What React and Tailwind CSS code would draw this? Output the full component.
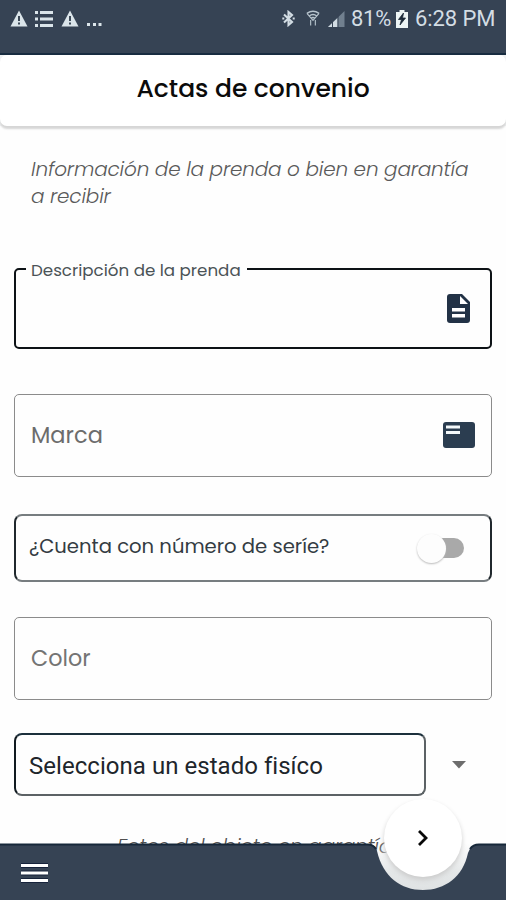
import React from "react";

const poppins = "font-['Poppins','Inter',sans-serif]";

function Warning() {
  return (
    <svg width="18" height="17" viewBox="0 0 18 17" className="shrink-0">
      <path d="M9 .5 L17.5 16.500 H.5Z" fill="#dbe5ea" />
      <path d="M9 6v5M9 12.500v2" stroke="#3b4856" strokeWidth="2" />
    </svg>
  );
}

function StatusBar() {
  return (
    <header className="h-[55px] shrink-0 border-b-2 border-[#182c40] bg-[#364354] text-[#d3dde4]">
      <div className="flex h-[37px] items-center pl-[10px] pr-[11px]">
        <Warning />
        <svg width="18" height="18" viewBox="0 0 18 18" className="ml-[7px]" fill="#dbe5ea">
          <path d="M0 1h3v3H0zM5 1h13v3H5zM0 7.500h3v3H0zM5 7.500h13v3H5zM0 14h3v3H0zM5 14h13v3H5z" />
        </svg>
        <div className="ml-[8px] flex"><Warning /></div>
        <svg width="16" height="18" viewBox="0 0 16 18" className="ml-[7px]" fill="#dbe5ea">
          <path d="M1 13h3v3H1zM7 13h3v3H7zM12.500 13h3v3h-3z" />
        </svg>
        <div className="ml-auto flex items-center">
          <svg width="13" height="17" viewBox="0 0 13 17" fill="none" stroke="#d3dde4" strokeWidth="2.1">
            <path d="M2 4.500 10 12 6.500 15V2L10 5 2 12.500" />
            <path d="M.3 8.500h2M10.700 8.500h2" />
          </svg>
          <svg width="14" height="17" viewBox="0 0 15 18" className="ml-[11px]" fill="none" stroke="#b7c4cd" strokeWidth="1.500">
            <path d="M1 3.500Q7.500-1 14 3.500M3.500 6.300Q7.500 3 11.500 6.300M5.500 8.800Q7.500 7 9.500 8.800" />
            <path d="M1 3.500 7.500 11 14 3.500M5 10.500v6M10 10.500v6" strokeWidth="1.2" />
          </svg>
          <svg width="18" height="18" viewBox="0 0 18 18" className="ml-[7px]">
            <path d="M17.500 1v16H1Z" fill="#71808f" />
            <path d="M10.500 8v9H1Z" fill="#d3dde4" />
            <path d="M5.500 8v10M11 4v14" stroke="#364354" />
          </svg>
          <span className="ml-[6px] w-[41px] whitespace-nowrap font-['Roboto',sans-serif] text-[22px] leading-none tracking-[-0.3px]">81%</span>
          <svg width="12" height="18" viewBox="0 0 12 18" className="ml-[4px]">
            <path d="M0 2h3.500V0h5v2H12v16H0Z" fill="#edf4f4" />
            <path d="M7.500 3 2.500 9.500h3L4 15l5.500-7H6.500Z" fill="#1c2937" stroke="#1c2937" strokeWidth=".8" />
          </svg>
          <span className="ml-[7px] w-[80px] whitespace-nowrap font-['Roboto',sans-serif] text-[22px] leading-none tracking-[-0.1px]">6:28 PM</span>
        </div>
      </div>
    </header>
  );
}

export default function App() {
  return (
    <div className={`relative flex h-[900px] w-[506px] flex-col overflow-hidden bg-[#fefefe] ${poppins}`}>
      <StatusBar />
      <div className="shrink-0 bg-[#f0f2f3]">
        <h1 className="flex h-[71px] items-center justify-center rounded-[7px] bg-white pb-[4px] text-[25px] font-medium tracking-[0px] text-[#0b0b0b] shadow-[0_3px_2px_#d6d6d6]">
          <span className="whitespace-nowrap">Actas de convenio</span>
        </h1>
      </div>
      <main className="flex flex-col px-[14px]">
        <p className="mt-[30px] h-[54px] whitespace-nowrap pl-[17px] text-[20px] font-light italic leading-[27px] tracking-[-0.18px] text-[#5a5a5a]">
          Información de la prenda o bien en garantía<br />a recibir
        </p>

        <fieldset className="mt-[50px] h-[89px] rounded-[5px] border-2 border-[#0d1216] pl-[10px]">
          <legend className="h-[18px] w-[221px] whitespace-nowrap px-[5px] text-[16.7px] leading-[21px] text-[#4b5357]">
            Descripción de la prenda
          </legend>
          <div className="flex h-[60px] items-center justify-end pr-[20px]">
            <svg width="23" height="29" viewBox="0 0 23 29">
              <path d="M3 0h12l8 8v18a3 3 0 0 1-3 3H3a3 3 0 0 1-3-3V3a3 3 0 0 1 3-3Z" fill="#223246" />
              <path d="M13 2v8h8ZM5 14h13v3.500H5zM5 20h13v3.500H5z" fill="#fff" />
            </svg>
          </div>
        </fieldset>

        <div className="mt-[45px] flex h-[83px] items-center justify-between rounded-[5px] border-[1.500px] border-[#8b8b8b] pl-[16px] pr-[16px]">
          <span className="text-[22.5px] text-[#6c6c6c]">Marca</span>
          <svg width="32" height="26" viewBox="0 0 32 26" className="mb-[1px]">
            <rect width="32" height="26" rx="3" fill="#2b3d50" />
            <path d="M3 3.500h14v3H3zM3 9h14v3H3z" fill="#f3f8fa" />
          </svg>
        </div>

        <div className="mt-[37px] flex h-[68px] items-center justify-between rounded-[8px] border-2 border-x-[#20282d] border-y-[#777d80] pl-[13px] pr-[26px]">
          <span className="whitespace-nowrap pb-[3px] text-[19.6px] text-[#343c43]">¿Cuenta con número de seríe?</span>
          <div className="flex items-center">
            <span className="relative z-10 size-[29px] rounded-full bg-[#fdfdfd] shadow-[0_1px_2px_#bbb]" />
            <span className="ml-[-16px] h-[20px] w-[34px] rounded-full bg-[#a9a9a9]" />
          </div>
        </div>

        <div className="mt-[35px] flex h-[83px] items-center rounded-[5px] border-[1.500px] border-[#8b8b8b] pl-[16px]">
          <span className="text-[22.3px] text-[#747474]">Color</span>
        </div>

        <div className="mt-[33px] flex items-center">
          <div className="flex h-[63px] w-[412px] items-center rounded-[8px] border-2 border-b-[#5c6265] border-l-[#111a20] border-r-[#5c6265] border-t-[#1c303c] pl-[13px] pt-[2px] font-['Roboto',sans-serif] text-[24px] tracking-[0.04px] text-[#20252b]">
            <span className="whitespace-nowrap">Selecciona un estado fisíco</span>
          </div>
          <svg width="14" height="8" viewBox="0 0 14 8" className="ml-[26px]"><path d="M0 0h14L7 7.500Z" fill="#6d6d6d" /></svg>
        </div>

        <p className="mt-[37px] whitespace-nowrap pl-[103px] text-[20px] font-light italic leading-[27px] tracking-[-0.22px] text-[#505050]">
          Fotos del objeto en garantía
        </p>
      </main>

      <footer className="absolute bottom-0 left-0 h-[57px] w-[506px]">
        <svg width="506" height="57" viewBox="0 0 506 57" className="absolute inset-0">
          <defs>
            <linearGradient id="notch" x1="0" y1="0" x2="0" y2="1">
              <stop offset="0" stopColor="#e4e7e8" stopOpacity="0" />
              <stop offset=".6" stopColor="#e2e5e6" stopOpacity=".9" />
              <stop offset="1" stopColor="#dfe2e3" />
            </linearGradient>
          </defs>
          <path d="M374 0C381 34 401 48 423 48C445 48 465 34 472 0Z" fill="url(#notch)" />
          <path d="M0 1H368Q375 1 377 8C383 34 401 47 423 47C445 47 463 34 468 10Q471 1 479 1H506V57H0Z" fill="#364354" />
          <path d="M0 1.500H368Q373 1.500 376 6M470 6Q473 1.500 479 1.500H506" fill="none" stroke="#17283a" strokeWidth="2" />
        </svg>
        <div className="relative flex h-full items-center pl-[21px] pt-[2px]">
          <svg width="27" height="22" viewBox="0 0 27 22" className="shrink-0">
            <path d="M0 3.500h27M0 11h27M0 18.500h27" stroke="#17233b" strokeWidth="5" />
            <path d="M0 3.500h27M0 11h27M0 18.500h27" stroke="#fff" strokeWidth="3" />
          </svg>
        </div>
      </footer>
      <button className="absolute left-[384px] top-[799px] flex size-[78px] items-center justify-center rounded-full bg-white shadow-[0_3px_5px_#ccc]">
        <svg width="12" height="18" viewBox="0 0 12 18" fill="none" stroke="#080808" strokeWidth="2.800"><path d="m2 2 7 7-7 7" /></svg>
      </button>
    </div>
  );
}
